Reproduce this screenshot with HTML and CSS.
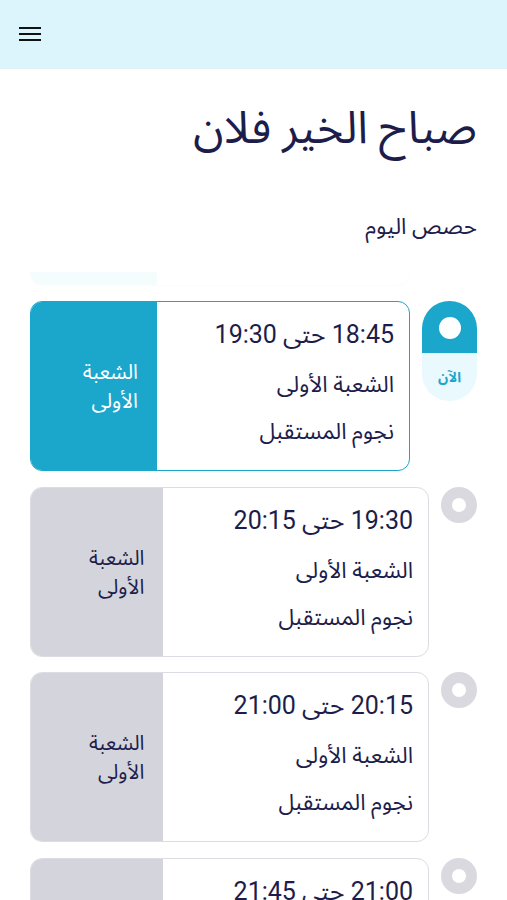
FILE: index.html
```html
<!DOCTYPE html>
<html lang="ar">
<head>
    <meta charset="UTF-8">
    <title>حصص اليوم</title>
    <link rel="stylesheet" href="styles.css">
</head>
<body>
<header class="topbar">
    <button class="menu-btn" aria-label="menu">
        <svg width="24" height="24" viewBox="0 0 24 24"><path d="M1 7h22M1 13h22M1 19h22" stroke="#111" stroke-width="2.2" fill="none"/></svg>
    </button>
</header>
<main class="page">
    <h1 class="title">صباح الخير فلان</h1>
    <h2 class="subtitle">حصص اليوم</h2>
    <div class="list">
        <div class="list-inner">
            <!-- حصة سابقة (مخفية جزئيا بالتمرير) -->
            <div class="row past">
                <div class="pill"></div>
                <div class="card">
                    <div class="info"></div>
                    <div class="side"></div>
                </div>
            </div>
            <div class="row now">
                <div class="pill">
                    <div class="pill-top"><span class="pill-dot"></span></div>
                    <div class="pill-bottom">الآن</div>
                </div>
                <div class="card">
                    <div class="info">
                        <div class="time">18:45 حتى 19:30</div>
                        <div class="line">الشعبة الأولى</div>
                        <div class="line">نجوم المستقبل</div>
                    </div>
                    <div class="side">الشعبة<br>الأولى</div>
                </div>
            </div>
            <div class="row">
                <div class="dot"></div>
                <div class="card">
                    <div class="info">
                        <div class="time">19:30 حتى 20:15</div>
                        <div class="line">الشعبة الأولى</div>
                        <div class="line">نجوم المستقبل</div>
                    </div>
                    <div class="side">الشعبة<br>الأولى</div>
                </div>
            </div>
            <div class="row">
                <div class="dot"></div>
                <div class="card">
                    <div class="info">
                        <div class="time">20:15 حتى 21:00</div>
                        <div class="line">الشعبة الأولى</div>
                        <div class="line">نجوم المستقبل</div>
                    </div>
                    <div class="side">الشعبة<br>الأولى</div>
                </div>
            </div>
            <div class="row">
                <div class="dot"></div>
                <div class="card">
                    <div class="info">
                        <div class="time">21:00 حتى 21:45</div>
                        <div class="line">الشعبة الأولى</div>
                        <div class="line">نجوم المستقبل</div>
                    </div>
                    <div class="side">الشعبة<br>الأولى</div>
                </div>
            </div>
        </div>
    </div>
</main>
</body>
</html>
```

FILE: styles.css
```css
* {
    margin: 0;
    padding: 0;
    box-sizing: border-box;
}

html, body {
    width: 100%;
    height: 100%;
    overflow: hidden;
}

body {
    background: #fff;
    color: #1d1d4b;
    font-family: Roboto, "Noto Sans Arabic", "Noto Sans", "DejaVu Sans", sans-serif;
}

.topbar {
    height: 69px;
    background: #dcf4fb;
    border-bottom: 1px solid #e3f1f5;
    display: flex;
    align-items: center;
    padding-left: 18px;
}

.menu-btn {
    border: none;
    background: none;
    display: flex;
    margin-top: -2px;
}

.page {
    direction: rtl;
    display: flex;
    flex-direction: column;
    height: calc(100% - 69px);
}

.title {
    font-size: 45px;
    font-weight: 400;
    line-height: 66px;
    padding: 26px 30px 0;
}

.subtitle {
    font-size: 22.5px;
    font-weight: 400;
    line-height: 40px;
    padding: 45px 30px 0;
}

.list {
    flex: 1;
    overflow: hidden;
    margin-top: 26px;
}

/* موضع التمرير الحالي */
.list-inner {
    margin-top: -156.5px;
    display: flex;
    flex-direction: column;
    gap: 15.5px;
    padding: 0 30px;
}

.row {
    display: flex;
    gap: 12px;
    align-items: flex-start;
}

.row.past {
    opacity: 0.08;
}

.card {
    flex: 1;
    height: 170px;
    display: grid;
    grid-template-columns: 2fr 1fr;
    border: 1px solid #dcdce2;
    border-radius: 12px;
    overflow: hidden;
    background: #fff;
}

.info {
    padding: 11px 15px 0;
}

.time {
    font-size: 25px;
    line-height: 44px;
}

.line {
    font-size: 22.5px;
    line-height: 40px;
    margin-top: 7px;
}

.side {
    background: #d4d4dc;
    display: flex;
    align-items: center;
    padding-right: 19px;
    font-size: 20.5px;
    line-height: 29px;
    padding-top: 2px;
}

.past .side {
    background: #7fdcf3;
}

.now .card {
    border: 1.5px solid #1ba6cc;
}

.now .side {
    background: #1ba6cc;
    color: #fff;
}

.dot {
    width: 36px;
    height: 36px;
    border-radius: 50%;
    background: #d9d9df;
    display: flex;
    align-items: center;
    justify-content: center;
}

.dot::after {
    content: "";
    width: 14px;
    height: 14px;
    border-radius: 50%;
    background: #fff;
}

.pill {
    width: 55px;
    height: 100px;
    border-radius: 28px;
    overflow: hidden;
    background: #e9f9fe;
}

.past .pill {
    background: none;
}

.pill-top {
    height: 52px;
    background: #1ba6cc;
    display: flex;
    justify-content: center;
    padding-top: 16px;
}

.pill-dot {
    width: 22px;
    height: 22px;
    border-radius: 50%;
    background: #fff;
}

.pill-bottom {
    text-align: center;
    color: #1ba6cc;
    font-size: 14px;
    font-weight: 700;
    padding-top: 10px;
}
```
